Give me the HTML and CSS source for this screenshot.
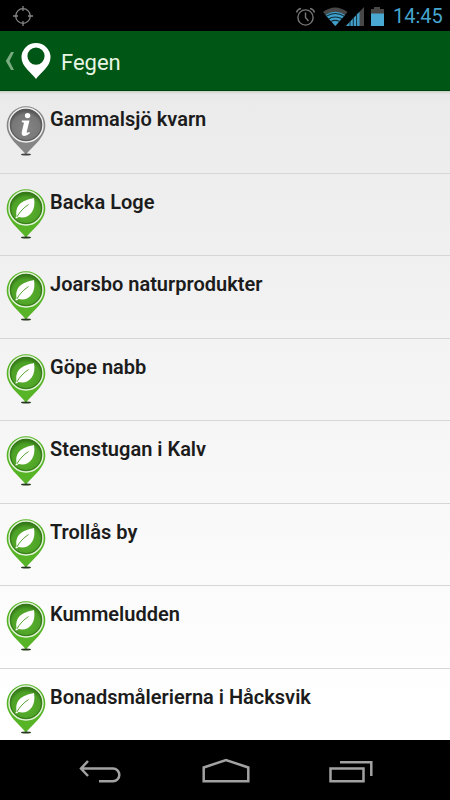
FILE: index.html
```html
<!DOCTYPE html>
<html lang="sv">
<head>
  <meta charset="utf-8">
  <title>Fegen</title>
  <link rel="stylesheet" href="styles.css">
</head>
<body>
  <svg class="defs" width="0" height="0">
    <defs>
      <radialGradient id="green" cy="0.6" r="0.55">
        <stop offset="0" stop-color="#5bb32c"/>
        <stop offset="0.75" stop-color="#4da127"/>
        <stop offset="1" stop-color="#317515"/>
      </radialGradient>
      <radialGradient id="gray" cy="0.6" r="0.55">
        <stop offset="0" stop-color="#858585"/>
        <stop offset="0.75" stop-color="#777"/>
        <stop offset="1" stop-color="#505050"/>
      </radialGradient>
      <symbol id="leaf-pin" viewBox="0 0 40 52">
        <path d="M20 49C17 43 .7 33 .7 19.5a19.3 19.3 0 0 1 38.6 0C39.3 33 23 43 20 49z" fill="#58b427"/>
        <ellipse cx="20" cy="48.5" rx="5" ry="1" fill="#263a1c"/>
        <circle cx="20" cy="19" r="17" fill="url(#green)" stroke="#e4f3dc" stroke-width="1.4"/>
        <circle cx="20" cy="19" r="15.6" fill="none" stroke="#37791b" stroke-width="1"/>
        <path d="M28 9C19 11 9 14 10.500 26.500L9.300 29.200L11 29.300L12.500 28C22 30.500 30.500 23 28 9z" fill="#fff"/>
        <path d="M10.800 28C14 22.500 17.500 19 22.500 15.500" fill="none" stroke="#58a535" stroke-width="1"/>
      </symbol>
      <symbol id="info-pin" viewBox="0 0 40 52">
        <path d="M20 49C17 43 .7 33 .7 19.5a19.3 19.3 0 0 1 38.6 0C39.3 33 23 43 20 49z" fill="#858585"/>
        <ellipse cx="20" cy="48.5" rx="5" ry="1" fill="#444"/>
        <circle cx="20" cy="19" r="17" fill="url(#gray)" stroke="#f0f0f0" stroke-width="1.4"/>
        <circle cx="20" cy="19" r="15.6" fill="none" stroke="#5a5a5a" stroke-width="1"/>
        <circle cx="21.600" cy="9.600" r="2.700" fill="#fff"/>
        <path d="M16 14.500H23.500L20.700 26Q20.500 27.500 23.300 26L24 27Q20.300 30.700 17.300 29.800Q15 29 15.900 25.500L18 16.800L15.700 16z" fill="#fff"/>
      </symbol>
    </defs>
  </svg>

  <div class="phone">
    <div class="status-bar">
      <svg class="gps" width="22" height="22" viewBox="0 0 22 22" fill="none" stroke="#858585" stroke-width="1.3">
        <circle cx="11" cy="11" r="7.3"/>
        <path d="M11 1v5M11 16v5M1 11h5M16 11h5"/>
      </svg>
      <svg class="status-icons" width="90" height="24" viewBox="0 0 90 24">
        <g fill="none" stroke="#777" stroke-width="1.4">
          <circle cx="10.500" cy="12.500" r="7.600"/>
          <path d="M10.500 7.500v5l3 3.500M1.500 7.500Q2.500 4 6 3.500M15 3.500Q18.500 4 19.500 7.500"/>
        </g>
        <path d="M28 7Q40-2 52.500 7L40.300 21z" fill="#484848"/>
        <path d="M30.500 10Q40.300 3.500 50 10L40.300 21z" fill="#3f9fc8"/>
        <path d="M31 11.400Q40.300 5.500 49.500 11.400M33.300 14Q40.300 10 47.300 14M35.800 16.500Q40.300 14.200 44.800 16.500" fill="none" stroke="#102b37" stroke-width="1.1"/>
        <path d="M51 21L69 2v19z" fill="#484848"/>
        <path d="M51 21L64.500 6.800V21z" fill="#3f9fc8"/>
        <path d="M55 16v5M58.300 13v8M61.600 10v11" stroke="#16303c"/>
        <path d="M76 4h3V2h6v2h4v5H76z" fill="#484848"/>
        <path d="M76 8.500h13V21H76z" fill="#4aa9d2"/>
      </svg>
      <span class="clock">14:45</span>
    </div>

    <div class="action-bar">
      <svg class="up" width="10" height="20" viewBox="0 0 10 20">
        <path d="M6 1h3L4.500 10L9 19H6L.8 10z" fill="#78ab7f"/>
      </svg>
      <svg class="logo" width="30" height="36" viewBox="0 0 30 36">
        <path fill-rule="evenodd" d="M15 36C11 30 .5 24 .5 14.300a14.500 14.300 0 0 1 29 0C29.500 24 19 30 15 36zM15 4.500a8.600 8.600 0 1 0 0 17.200a8.600 8.600 0 1 0 0-17.200z" fill="#fff"/>
      </svg>
      <h1>Fegen</h1>
    </div>

    <ul class="places">
      <li><svg class="pin"><use href="#info-pin"/></svg><span>Gammalsjö kvarn</span></li>
      <li><svg class="pin"><use href="#leaf-pin"/></svg><span>Backa Loge</span></li>
      <li><svg class="pin"><use href="#leaf-pin"/></svg><span>Joarsbo naturprodukter</span></li>
      <li><svg class="pin"><use href="#leaf-pin"/></svg><span>Göpe nabb</span></li>
      <li><svg class="pin"><use href="#leaf-pin"/></svg><span>Stenstugan i Kalv</span></li>
      <li><svg class="pin"><use href="#leaf-pin"/></svg><span>Trollås by</span></li>
      <li><svg class="pin"><use href="#leaf-pin"/></svg><span>Kummeludden</span></li>
      <li><svg class="pin"><use href="#leaf-pin"/></svg><span>Bonadsmålerierna i Håcksvik</span></li>
    </ul>

    <div class="nav-bar">
      <svg width="44" height="26" viewBox="0 0 44 26">
        <path d="M10 3L3 10.500L10 18M3 10.500H35a6.200 6.200 0 0 1 0 12.700H21"/>
      </svg>
      <svg width="48" height="26" viewBox="0 0 48 26">
        <path d="M1.700 9.500L24 2L46.300 9.500V23.300H1.700z"/>
      </svg>
      <svg width="44" height="26" viewBox="0 0 44 26">
        <path d="M1.500 10.500H34.500V23.300H1.500zM11 4.300H42.300V18"/>
      </svg>
    </div>
  </div>
</body>
</html>
```

FILE: styles.css
```css
body {
  margin: 0;
  background: #000;
  font-family: Roboto, "Liberation Sans", sans-serif;
}

.defs {
  position: absolute;
}

.phone {
  display: flex;
  flex-direction: column;
  height: 800px;
  overflow: hidden;
}

.status-bar {
  display: flex;
  align-items: center;
  height: 31px;
  padding: 0 7px 0 12px;
  background: #000;
}

.status-icons {
  margin-left: auto;
  margin-top: 3px;
}

.clock {
  width: 50px;
  margin-left: 8px;
  padding-top: 2px;
  color: #46a5ce;
  font-size: 20px;
  line-height: 31px;
  white-space: nowrap;
}

.action-bar {
  display: flex;
  align-items: center;
  box-sizing: border-box;
  height: 60px;
  padding-left: 5px;
  background: #005614;
  border-bottom: 1px solid #00420c;
}

.logo {
  margin-left: 6px;
}

.action-bar h1 {
  margin: 3px 0 0 10px;
  color: #e8f5e4;
  font-size: 22px;
  font-weight: 400;
}

.places {
  flex: 1;
  min-height: 0;
  margin: 0;
  padding: 0;
  overflow: hidden;
  list-style: none;
  background: linear-gradient(#c5d0c4 0, #e9e7e9 3px, #ebebeb 10px, #fff 95%);
}

.places li {
  display: flex;
  box-sizing: border-box;
  height: 82.5px;
  padding: 15px 0 0 6px;
  border-bottom: 1px solid #d6d6d6;
}

.pin {
  width: 40px;
  height: 52px;
}

.places span {
  margin-left: 4px;
  color: #1c1c1c;
  font-size: 20px;
  font-weight: 600;
  line-height: 26px;
}

.nav-bar {
  display: flex;
  justify-content: space-between;
  box-sizing: border-box;
  height: 60px;
  padding: 18px 77px 0 78px;
  background: #000;
}

.nav-bar path {
  fill: none;
  stroke: #a2a2a2;
  stroke-width: 2.5;
}
```
